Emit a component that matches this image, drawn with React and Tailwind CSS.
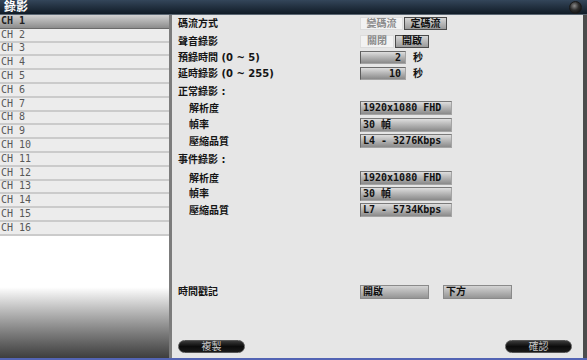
import React from 'react'

const CHANNELS = Array.from({ length: 16 }, (_, i) => `CH ${i + 1}`)

const cjk = { fontFamily: '"DejaVu Sans", "Noto Sans CJK TC", sans-serif' }
const mono = { fontFamily: '"DejaVu Sans Mono", "Noto Sans CJK TC", monospace' }

function Label({ children, indent }) {
  return (
    <span className={`text-[10px] font-bold text-[#141414] ${indent ? 'pl-[11px]' : ''}`} style={cjk}>
      {children}
    </span>
  )
}

function Drop({ children }) {
  return (
    <div
      className="flex h-[14px] w-[92px] items-center border border-[#a4a4a4] border-l-[#6c6c6c] border-t-[#7a7a7a] bg-linear-to-b from-[#dedede] to-[#8a8a8a] pl-[2px] text-[10px] font-bold leading-none text-[#111]"
      style={mono}
    >
      {children}
    </div>
  )
}

function Num({ value }) {
  return (
    <div className="flex items-center gap-[7px]">
      <div
        className="flex h-[13px] w-[46px] items-center justify-end border border-[#a4a4a4] border-l-[#5c5c5c] border-t-[#6c6c6c] bg-linear-to-b from-[#dedede] to-[#8a8a8a] pr-[4px] text-[10px] font-bold leading-none text-[#111]"
        style={mono}
      >
        {value}
      </div>
      <span className="text-[10px] font-bold text-[#141414]" style={cjk}>秒</span>
    </div>
  )
}

function Seg({ left, right, w }) {
  return (
    <div className="flex h-[13px] gap-[1px]">
      <div
        className={`flex items-center justify-center border border-[#dcdcdc] bg-[#f2f2f2] text-[10px] font-bold leading-none text-[#8a8a8a] ${w}`}
        style={cjk}
      >
        {left}
      </div>
      <div
        className={`flex items-center justify-center border border-[#4a4a4a] bg-linear-to-b from-[#d6d6d6] to-[#9a9a9a] text-[10px] font-bold leading-none text-[#111] ${w}`}
        style={cjk}
      >
        {right}
      </div>
    </div>
  )
}

function Pill({ children }) {
  return (
    <div
      className="flex h-[13px] w-[67px] items-center justify-center rounded-full border border-[#555] bg-linear-to-b from-[#3a3a3a] via-[#0c0c0c] to-[#1a1a1a] text-[10px] leading-none text-[#c8c8c8]"
      style={cjk}
    >
      {children}
    </div>
  )
}

function Row({ h, label, indent, children }) {
  return (
    <div className={`grid grid-cols-[182px_1fr] items-center ${h}`}>
      <Label indent={indent}>{label}</Label>
      <div className="flex items-center">{children}</div>
    </div>
  )
}

export default function App() {
  return (
    <div className="flex h-[360px] w-[587px] flex-col overflow-hidden bg-[#e6e6e6]">
      {/* title bar */}
      <div className="flex h-[15px] items-center justify-between border-b border-[#5a6672] bg-linear-to-b from-[#34465a] to-[#111c27] pl-[4px] pr-[5px]">
        <span className="text-[12px] font-bold leading-none text-white" style={cjk}>錄影</span>
        <div className="h-[13px] w-[13px] rounded-full border border-[#1a1a1a] bg-[radial-gradient(circle_at_40%_35%,#8a8a8a_0%,#2e2e2e_45%,#050505_100%)]" />
      </div>

      <div className="flex flex-1">
        {/* channel list */}
        <div className="flex w-[169px] flex-col">
          {CHANNELS.map((ch, i) => (
            <div
              key={ch}
              className={
                i === 0
                  ? 'flex h-[13.8px] items-center border-b border-[#6a6a6a] bg-linear-to-b from-[#d2d2d2] to-[#8c8c8c] pl-[1px] text-[10px] font-bold leading-none text-[#222]'
                  : 'flex h-[13.8px] items-center border-b-2 border-[#cbcbcb] bg-[#ececec] pl-[1px] text-[10px] leading-none text-[#585858]'
              }
              style={mono}
            >
              {ch}
            </div>
          ))}
          <div className="flex-1 bg-linear-to-b from-white from-[42%] to-[#3e3e3e]" />
        </div>

        <div className="w-[3px] bg-[#7c7c7c]" />

        {/* settings */}
        <div className="flex flex-1 flex-col pl-[6px]">
          <Row h="h-[17px]" label="碼流方式">
            <Seg left="變碼流" right="定碼流" w="w-[43px]" />
          </Row>
          <Row h="h-[18px]" label="聲音錄影">
            <Seg left="關閉" right="開啟" w="w-[34px]" />
          </Row>
          <Row h="h-[15px]" label="預錄時間 (0 ~ 5)">
            <Num value="2" />
          </Row>
          <Row h="h-[17px]" label="延時錄影 (0 ~ 255)">
            <Num value="10" />
          </Row>
          <Row h="h-[18px]" label="正常錄影 :" />
          <Row h="h-[16px]" label="解析度" indent>
            <Drop>1920x1080 FHD</Drop>
          </Row>
          <Row h="h-[17px]" label="幀率" indent>
            <Drop>30 幀</Drop>
          </Row>
          <Row h="h-[16px]" label="壓縮品質" indent>
            <Drop>L4 - 3276Kbps</Drop>
          </Row>
          <Row h="h-[21px]" label="事件錄影 :" />
          <Row h="h-[16px]" label="解析度" indent>
            <Drop>1920x1080 FHD</Drop>
          </Row>
          <Row h="h-[15px]" label="幀率" indent>
            <Drop>30 幀</Drop>
          </Row>
          <Row h="h-[18px]" label="壓縮品質" indent>
            <Drop>L7 - 5734Kbps</Drop>
          </Row>

          <div className="mt-[65px] grid h-[14px] grid-cols-[182px_1fr] items-center">
            <Label>時間戳記</Label>
            <div className="flex gap-[14px]">
              <div
                className="flex h-[14px] w-[69px] items-center border border-[#8a8a8a] bg-linear-to-b from-[#d4d4d4] to-[#959595] pl-[2px] text-[10px] font-bold leading-none text-[#111]"
                style={cjk}
              >
                開啟
              </div>
              <div
                className="flex h-[14px] w-[69px] items-center border border-[#8a8a8a] bg-linear-to-b from-[#d4d4d4] to-[#959595] pl-[2px] text-[10px] font-bold leading-none text-[#111]"
                style={cjk}
              >
                下方
              </div>
            </div>
          </div>

          <div className="mt-[42px] flex justify-between pr-[11px]">
            <Pill>複製</Pill>
            <Pill>確認</Pill>
          </div>
        </div>

        <div className="w-[4px] bg-[#4c4c4c]" />
      </div>

      <div className="h-[2px] bg-[#5364b4]" />
    </div>
  )
}
